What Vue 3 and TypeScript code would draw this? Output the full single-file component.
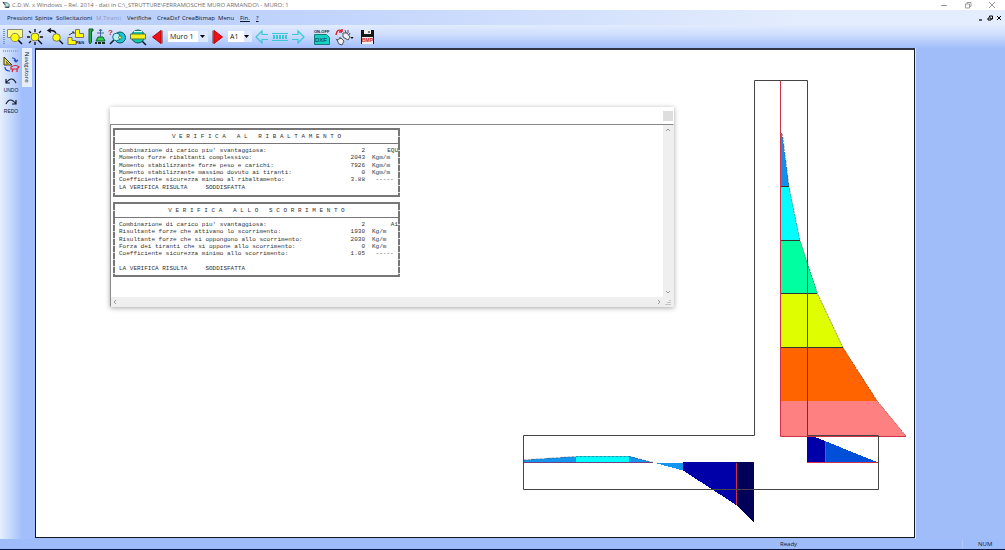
<script setup lang="ts">
import { ref } from 'vue'

interface MenuItem { label: string; disabled?: boolean; underline?: boolean }
interface Row { label: string; value?: string; unit?: string; tail?: string }
interface Report { title: string; rows: Row[] }
interface Zone { points: string; fill: string }

const menu: MenuItem[] = [
  { label: 'Pressioni' },
  { label: 'Spinte' },
  { label: 'Sollecitazioni' },
  { label: 'M.Tiranti', disabled: true },
  { label: 'Verifiche' },
  { label: 'CreaDxf' },
  { label: 'CreaBitmap' },
  { label: 'Menu' },
  { label: 'Fin.', underline: true },
  { label: '?', underline: true },
]

const wall = ref('Muro 1')
const combo = ref('A1')

const reports: Report[] = [
  {
    title: 'V E R I F I C A   A L   R I B A L T A M E N T O',
    rows: [
      { label: "Combinazione di carico piu' svantaggiosa:", value: '2', tail: 'EQU' },
      { label: 'Momento forze ribaltanti complessivo:', value: '2043', unit: 'Kgm/m' },
      { label: 'Momento stabilizzante forze peso e carichi:', value: '7926', unit: 'Kgm/m' },
      { label: 'Momento stabilizzante massimo dovuto ai tiranti:', value: '0', unit: 'Kgm/m' },
      { label: 'Coefficiente sicurezza minimo al ribaltamento:', value: '3.88', unit: ' -----' },
      { label: 'LA VERIFICA RISULTA     SODDISFATTA' },
    ],
  },
  {
    title: 'V E R I F I C A   A L L O   S C O R R I M E N T O',
    rows: [
      { label: "Combinazione di carico piu' svantaggiosa:", value: '2', tail: 'A1' },
      { label: 'Risultante forze che attivano lo scorrimento:', value: '1930', unit: 'Kg/m' },
      { label: 'Risultante forze che si oppongono allo scorrimento:', value: '2030', unit: 'Kg/m' },
      { label: 'Forza dei tiranti che si oppone allo scorrimento:', value: '0', unit: 'Kg/m' },
      { label: 'Coefficiente sicurezza minimo allo scorrimento:', value: '1.05', unit: ' -----' },
      { label: ' ' },
      { label: 'LA VERIFICA RISULTA     SODDISFATTA' },
    ],
  },
]

const zones: Zone[] = [
  { points: '781,133 782,133 789,186.5 781,186.5', fill: '#0f8ff0' },
  { points: '781,186.5 789,186.5 800,240.5 781,240.5', fill: '#00ffff' },
  { points: '781,240.5 800,240.5 817.5,293.5 781,293.5', fill: '#00ffa0' },
  { points: '781,293.5 817.5,293.5 843,347.5 781,347.5', fill: '#dfff00' },
  { points: '781,347.5 843,347.5 877,400.5 781,400.5', fill: '#ff6400' },
  { points: '781,400.5 877,400.5 906,436 781,436', fill: '#ff8080' },
  { points: '807,434 825,441 825,462.5 807,462.5', fill: '#0000a8' },
  { points: '825,441 878,462.5 825,462.5', fill: '#004fd8' },
  { points: '523.5,460 576,456.5 576,462.5 523.5,462.5', fill: '#1496f0' },
  { points: '576,456 629,456 629,462.5 576,462.5', fill: '#00ffff' },
  { points: '629,456 653,462.5 629,462.5', fill: '#1496f0' },
  { points: '653,462.5 683,462.5 683,470.5', fill: '#1496f0' },
  { points: '683,462 737,462 737,505.5 683,470.5', fill: '#0000a8' },
  { points: '736,462 754,462 754,523 736,505', fill: '#000058' },
]
</script>

<template>
  <div class="app">
    <header class="titlebar">
      <svg class="logo" viewBox="0 0 9 9"><path d="M1 2h5l2 2v3H3" fill="#cfe6df" stroke="#2f6f78" /><path d="M1 1l3 4M4 7h4" stroke="#223" fill="none" /></svg>
      <h1>C.D.W. x Windows – Rel. 2014 - dati in C:\_STRUTTURE\FERRAMOSCHE MURO ARMANDO\ - MURO: 1</h1>
      <div class="winbtns">
        <button aria-label="Riduci"><svg viewBox="0 0 8 8"><path d="M1 4.500h6" stroke="#999" /></svg></button>
        <button aria-label="Ripristina"><svg viewBox="0 0 8 8"><path d="M1.500 3h4v4h-4zM3 3V1.500h4v4H5.500" fill="none" stroke="#888" stroke-width=".8" /></svg></button>
        <button aria-label="Chiudi"><svg viewBox="0 0 8 8"><path d="M1 1l6 6M7 1L1 7" stroke="#888" stroke-width=".8" /></svg></button>
      </div>
    </header>

    <nav class="menubar">
      <button v-for="m in menu" :key="m.label" :disabled="m.disabled" :class="{ underline: m.underline }">{{ m.label }}</button>
      <div class="mdi">
        <button aria-label="Riduci finestra"><svg viewBox="0 0 6 6"><path d="M1 5h3" stroke="#000" stroke-width="1.200" /></svg></button>
        <button aria-label="Ripristina finestra"><svg viewBox="0 0 6 6"><path d="M1 3h3v2H1zM2.500 2V1h3v3H4" fill="none" stroke="#000" /></svg></button>
        <button aria-label="Chiudi finestra"><svg viewBox="0 0 6 6"><path d="M1 1l4 4M5 1L1 5" stroke="#000" /></svg></button>
      </div>
    </nav>

    <div class="toolbar">
      <i class="grip"></i>
      <button aria-label="Zoom finestra">
        <svg viewBox="0 0 20 18"><path d="M2.500 1.500h15v8h-15z" fill="#ffff80" stroke="#887" /><path d="M13 12l4 4" stroke="#112" stroke-width="1.600" /><circle cx="10" cy="9.500" r="4.200" fill="#ff0" stroke="#886" /></svg>
      </button>
      <button aria-label="Zoom tutto">
        <svg viewBox="0 0 20 18"><path d="M10 1v3M10 14v3M2 9h3M15 9h3M4 3l2 2M16 3l-2 2M4 15l2-2M13 12l4 4" stroke="#112" stroke-width="1.400" /><circle cx="10" cy="9" r="4" fill="#ff0" stroke="#775" /></svg>
      </button>
      <button class="sep" aria-label="Zoom precedente">
        <svg viewBox="0 0 20 18"><path d="M2 2.500h3q4 0 5 3M5 .500L2 2.500l3 2M13 12l4 4" fill="none" stroke="#112" stroke-width="1.300" /><circle cx="10.500" cy="9.500" r="3.800" fill="#ff0" stroke="#775" /></svg>
      </button>
      <button aria-label="Pan">
        <svg viewBox="0 0 20 18"><path d="M9.500 1.500h4v4h4v4h-8zM2 9.500h4v3h4v4H2z" fill="#ff0" stroke="#776" /><path d="M3 7l5-3M6 4h2v2" fill="none" stroke="#334" /><text x="10" y="16" class="tiny">PAN</text></svg>
      </button>
      <button class="sep" aria-label="Assi">
        <svg viewBox="0 0 20 18"><path d="M2 1h4v2H4.500v11l-1.500 2-1-2z" fill="#20b040" stroke="#175b28" /><path d="M9 13l2-4h5l2 4z" fill="#30d050" stroke="#175b28" /><path d="M13.500 1v8M10 5h7M12 3l1.500-2L15 3" fill="none" stroke="#48679a" /><path d="M8 15h2M11 15h3M15 15h3" stroke="#12301c" stroke-width="2" /></svg>
      </button>
      <button aria-label="Interroga">
        <svg viewBox="0 0 20 18"><path d="M3 16l5-5" stroke="#123" stroke-width="1.600" /><circle cx="13" cy="9.500" r="5.500" fill="#18c8d8" stroke="#155" /><circle cx="9.500" cy="9" r="3.800" fill="#b8f0f4" stroke="#177" /><circle cx="13" cy="9.500" r="1.500" fill="#e8f850" stroke="#155" stroke-width=".6" /><text x="1" y="7" class="query">?</text></svg>
      </button>
      <button class="sep" aria-label="Vista">
        <svg viewBox="0 0 20 18"><path d="M14 13l4 4" stroke="#112" stroke-width="1.500" /><circle cx="10" cy="8.500" r="6.500" fill="#10c8b0" stroke="#154" /><path d="M2.500 6h15v5h-15z" fill="#f4f018" stroke="#575" /><path d="M6 3.500h8" stroke="#d8ffff" /></svg>
      </button>
      <button aria-label="Muro precedente">
        <svg viewBox="0 0 20 18"><path d="M4.500 9L13 2.500v13z" fill="#f01020" stroke="#b00" /><path d="M14 2.500v13" stroke="#633" /></svg>
      </button>
      <label class="combo wide"><select v-model="wall" aria-label="Muro"><option>Muro 1</option></select><svg viewBox="0 0 5 3"><path d="M0 0h5L2.500 3z" /></svg></label>
      <button aria-label="Muro successivo">
        <svg viewBox="0 0 20 18"><path d="M14.500 9L6 2.500v13z" fill="#f01020" stroke="#b00" /><path d="M5 2.500v13" stroke="#633" /></svg>
      </button>
      <label class="combo"><select v-model="combo" aria-label="Combinazione"><option>A1</option></select><svg viewBox="0 0 5 3"><path d="M0 0h5L2.500 3z" /></svg></label>
      <button class="scroll" aria-label="Indietro">
        <svg viewBox="0 0 18 18"><path d="M15 6.500H9V3L3 9l6 6v-3.500h6" fill="none" stroke="#38c8d8" stroke-width="1.200" /></svg>
      </button>
      <button class="scroll" aria-label="Scorri">
        <svg viewBox="0 0 18 18"><path d="M1 5.500h16M1 12.500h16" stroke="#38c8d8" /><path d="M2 9h14" stroke="#38c8d8" stroke-width="4" stroke-dasharray="2 1" /></svg>
      </button>
      <button class="scroll" aria-label="Avanti">
        <svg viewBox="0 0 18 18"><path d="M3 6.500h6V3l6 6-6 6v-3.500H3" fill="none" stroke="#38c8d8" stroke-width="1.200" /></svg>
      </button>
      <button class="dxf" aria-label="DXF on-off">
        <svg viewBox="0 0 20 18"><text x="2" y="4.500" class="tiny">ON-OFF</text><path d="M2.500 6.500h12l3 3v7h-15z" fill="#18d0c0" stroke="#187a78" /><text x="3" y="14" class="dxftext">DXF</text></svg>
      </button>
      <button class="hand" aria-label="Passi">
        <svg viewBox="0 0 20 18"><path d="M2 7Q3 0 8 3M8 4L5 4M8 4V1" fill="none" stroke="#e01828" stroke-width="1.400" /><path d="M3 12l4-2 3 3-2 4-3-1zM9 5l4 0 3 4-2 3-5-3zM11 2l1 3M14 2v3M16 5l-1 2M2 11l2 2M6 9v2" fill="#eee" stroke="#444" stroke-width=".9" /><path d="M16.500 9h3L18 11z" /></svg>
      </button>
      <button class="save" aria-label="Salva BMP">
        <svg viewBox="0 0 20 18"><path d="M4 2h13v14H4z" fill="#161616" /><path d="M7 2h7v4H7zM5 9h11v7H5z" fill="#eee" /><path d="M12 3v2" stroke="#111" /><text x="5" y="14" class="bmptext">BMP</text></svg>
      </button>
    </div>

    <main class="workspace">
      <aside class="side">
        <div class="tools">
          <i class="grip flat"></i>
          <button aria-label="Squadra">
            <svg viewBox="0 0 18 18"><path d="M2 2v8h8z" fill="#f0e020" stroke="#333" /><path d="M4.500 6.500v2h2z" fill="#fff" stroke="#333" stroke-width=".6" /><path d="M10 3q4 0 4 4M12 5l2 2 2-2M3 12q0 4 5 4" fill="none" stroke="#2048c8" stroke-width="1.200" /><path d="M9 12q5-3 8 0l-2 2H9zM11 14l-1 3M15 14v3" fill="none" stroke="#d82030" stroke-width="1.200" /></svg>
          </button>
          <button aria-label="Annulla"><svg viewBox="0 0 18 18"><path d="M4 7Q10-1 14 7M4 3v4h4" fill="none" stroke="#101828" stroke-width="1.200" /><text x="9" y="16" class="cmd">UNDO</text></svg></button>
          <button aria-label="Ripeti"><svg viewBox="0 0 18 18"><path d="M4 7Q8-1 14 7M14 3v4h-4" fill="none" stroke="#101828" stroke-width="1.200" /><text x="9" y="16" class="cmd">REDO</text></svg></button>
        </div>
        <button class="tab">Navigatore</button>
      </aside>

      <section class="canvas">
        <svg class="drawing" viewBox="36 50 878 487" preserveAspectRatio="xMinYMin meet">
          <g shape-rendering="crispEdges">
            <polygon v-for="z in zones" :key="z.points" :points="z.points" :fill="z.fill" />
          </g>
          <g fill="none" stroke-width="1">
            <path d="M782.500 134L789 186.500 800 240.500 817.500 293.500 843 347.500 877 400.500 906 436" stroke="#554" stroke-width=".6" stroke-dasharray="2 1" />
            <path d="M523.500 460L576 456.500H629L653 462.500" stroke="#456" stroke-width=".6" stroke-dasharray="3 1" />
            <path d="M780.500 80V436.500H906M825.500 441V462M736.500 463V505M807 462.500H878" stroke="#d03048" />
            <path d="M523.500 462.500H653" stroke="#704080" />
            <path d="M781 186.500H789M781 240.500H800M781 293.500H817M781 347.500H843" stroke="#303830" />
            <path d="M754.500 435.500V80.500H807.500V436" stroke="#444" />
            <path d="M754.500 435.500H523.500V489.500H878.500V435.500H807.500" stroke="#444" />
          </g>
        </svg>

        <article class="report-window">
          <header><button aria-label="Chiudi rapporto"></button></header>
          <div class="body">
            <div class="paper">
              <section v-for="r in reports" :key="r.title" class="frame">
                <h2>{{ r.title }}</h2>
                <div class="rows">
                  <div v-for="(row, i) in r.rows" :key="i" class="row">
                    <span class="label">{{ row.label }}</span>
                    <span class="value">{{ row.value }}</span>
                    <span class="unit">{{ row.unit }}</span>
                    <span class="tail">{{ row.tail }}</span>
                  </div>
                </div>
              </section>
            </div>
            <div class="vscroll">
              <svg viewBox="0 0 6 4"><path d="M1 3l2-2 2 2" /></svg>
              <svg viewBox="0 0 6 4"><path d="M1 1l2 2 2-2" /></svg>
            </div>
            <div class="hscroll">
              <svg viewBox="0 0 4 6"><path d="M3 1L1 3l2 2" /></svg>
              <svg viewBox="0 0 4 6"><path d="M1 1l2 2-2 2" /></svg>
            </div>
            <div class="corner"><svg viewBox="0 0 6 6"><path d="M5 1v1M3 3v1M5 3v1M1 5v1M3 5v1M5 5v1" /></svg></div>
          </div>
        </article>
      </section>
      <aside class="dock"></aside>
    </main>

    <footer class="status"><span class="ready">Ready</span><span class="num">NUM</span></footer>
  </div>
</template>

<style>
body { margin: 0; }
</style>

<style scoped>
.app {
  display: flex;
  flex-direction: column;
  min-height: 100vh;
  font-family: "Open Sans", "Noto Sans", sans-serif;
  font-size: 6px;
  line-height: 8px;
  color: #101830;
  background: #a0bdfa;
}
* { box-sizing: border-box; }
button { border: 0; padding: 0; margin: 0; background: none; font: inherit; color: inherit; text-align: left; white-space: nowrap; }
svg { display: block; }

.titlebar { display: flex; align-items: center; height: 10px; padding-left: 2px; background: #fff; }
.logo { width: 8px; height: 8px; margin-right: 2px; }
h1 { margin: 0; font-size: 6px; font-weight: 400; color: #707070; white-space: nowrap; }
.winbtns { display: flex; gap: 16px; margin-left: auto; padding-right: 9px; }
.winbtns svg { width: 8px; height: 8px; }

.menubar {
  display: grid;
  grid-template-columns: 28px 21px 40px 31px 30px 25px 36px 22px 16px 8px 1fr;
  align-items: center;
  height: 15px;
  padding-left: 7px;
  background: linear-gradient(90deg, #b7cdfb, #c0d3fc 30%, #e4edfd 80%);
}
.menubar button:disabled { color: #8e9cc0; }
.underline { text-decoration: underline; }
.mdi { display: flex; justify-content: flex-end; gap: 3px; padding-right: 3px; }
.mdi svg { width: 6px; height: 6px; }

.toolbar {
  display: flex;
  align-items: center;
  height: 23px;
  padding-left: 3px;
  background: linear-gradient(#e2ecfe, #cfdefd 40%, #a2befb);
}
.toolbar button { flex: none; width: 20px; }
.toolbar button svg { width: 20px; height: 18px; }
.toolbar .sep { margin-left: 1px; }
.toolbar .scroll, .toolbar .scroll svg { width: 18px; }
.grip { width: 2px; height: 15px; background: repeating-linear-gradient(#7d93c8 0 1px, transparent 1px 2px); }
.grip.flat { width: 15px; height: 2px; margin-left: 3px; background: repeating-linear-gradient(90deg, #9aabda 0 1px, transparent 1px 2px); }
.tiny { font: 700 4px "Liberation Sans", sans-serif; fill: #223; }
.query { font: 700 8px "Liberation Sans", sans-serif; fill: #d02030; }
.dxftext { font: 6px "Liberation Sans", sans-serif; fill: #124; }
.bmptext { font: 700 5px "Liberation Sans", sans-serif; fill: #d02020; }
.cmd { font: 5px "Liberation Sans", sans-serif; fill: #101828; text-anchor: middle; }

.combo { display: flex; flex: none; align-items: center; width: 24px; height: 11px; padding-right: 3px; margin-right: 1px; background: linear-gradient(90deg, #fff 16px, #dce8fe 16px); }
.combo.wide { width: 40px; margin: 0; background: linear-gradient(90deg, #fff 30px, #dce8fe 30px); }
.combo select { flex: 1; min-width: 0; border: 0; padding: 0 0 0 2px; font: inherit; font-size: 7px; line-height: 10px; color: #101828; background: transparent; appearance: none; }
.combo svg { width: 5px; height: 3px; }
.toolbar .dxf { margin-left: 5px; }
.toolbar .hand { margin-left: 2px; }
.toolbar .save { margin-left: 3px; }

.workspace { display: flex; flex: 1; min-height: 491px; }
.side { display: flex; width: 35px; background: linear-gradient(90deg, #e6effd, #a3bffb 22px); }
.tools { display: flex; flex-direction: column; width: 22px; padding-top: 2px; }
.tools button { margin: 3px 0 0 2px; }
.tools svg { width: 18px; height: 18px; }
.tab { width: 10px; height: 39px; writing-mode: vertical-rl; text-align: center; background: #e6eefc; font-size: 6px; line-height: 10px; }
.canvas { position: relative; flex: 1; min-width: 0; border: 1px solid #15181f; border-top: 2px solid #303644; background: #fff; margin-bottom: 1px; }
.drawing { width: 100%; height: auto; }
.dock { width: 90px; border-left: 1px solid #dde7fc; }

.report-window { position: absolute; left: 74px; top: 57px; width: 564px; background: #fff; box-shadow: 0 1px 5px rgba(0, 0, 0, .35); }
.report-window header { display: flex; justify-content: flex-end; align-items: center; height: 17px; padding-right: 1px; }
.report-window header button { width: 10px; height: 10px; background: #dedede; }
.body { display: grid; grid-template-columns: 1fr 10px; grid-template-rows: auto 9px; border: 1px solid #888; border-right-color: #eee; border-bottom-color: #eee; }
.paper { display: flex; flex-direction: column; gap: 5px; height: 172px; padding: 3px 0 0 2px; font-family: "Liberation Mono", monospace; color: #333; white-space: pre; }
.frame {
  width: 287px;
  border: solid #777;
  border-width: 2px 0;
  background:
    repeating-linear-gradient(#777 0 6px, #ddd 6px 7px) left / 2px 100% no-repeat,
    repeating-linear-gradient(#777 0 6px, #ddd 6px 7px) right / 2px 100% no-repeat;
}
h2 { margin: 0; height: 14px; border-bottom: 1px solid #777; font-size: 6px; line-height: 13px; font-weight: 400; text-align: center; }
.rows { display: grid; grid-auto-rows: 1fr; height: 51px; padding: 3px 2px 4px 6px; }
.frame:last-child .rows { height: 57px; padding-bottom: 3px; }
.row { display: grid; grid-template-columns: 190px 56px 20px 1fr; min-height: 0; line-height: 7px; }
.value, .tail { text-align: right; }
.unit { padding-left: 7px; }
.vscroll { display: flex; flex-direction: column; align-items: center; justify-content: space-between; padding: 3px 0; background: #efefef; }
.hscroll { display: flex; align-items: center; justify-content: space-between; padding: 0 2px; background: #efefef; }
.vscroll svg { width: 6px; height: 4px; }
.hscroll svg { width: 4px; height: 6px; }
.vscroll path, .hscroll path, .corner path { fill: none; stroke: #999; }
.corner { background: #efefef; padding: 2px; }
.corner svg { width: 6px; height: 6px; }

.status { display: flex; align-items: center; height: 11px; border-bottom: 1px solid #0a1640; background: #9fbcfa; }
.ready { margin-left: auto; width: 182px; }
.num { width: 43px; padding-left: 15px; border-left: 1px solid #b5cbfb; }
</style>
